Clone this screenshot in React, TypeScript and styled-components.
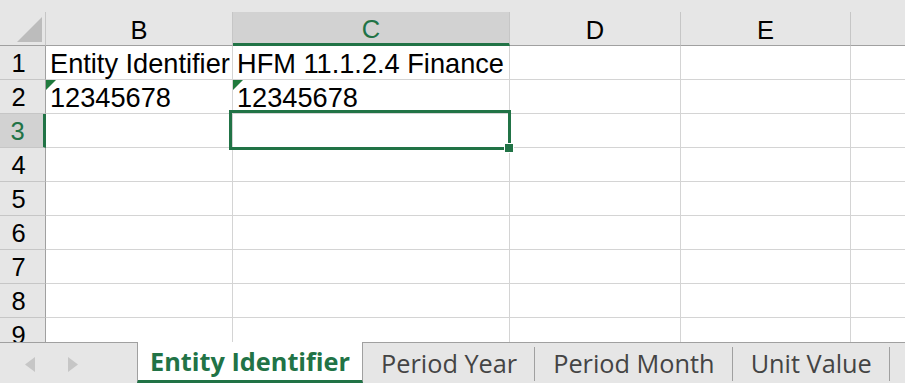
import React from "react";
import styled, { createGlobalStyle, css } from "styled-components";

const GREEN = "#217346";

const GlobalStyle = createGlobalStyle`
    html, body {
        margin: 0;
        padding: 0;
        background: #ffffff;
        overflow: hidden;
    }
`;

const Window = styled.div`
    width: 905px;
    height: 383px;
    display: flex;
    flex-direction: column;
    overflow: hidden;
    background: #ffffff;
`;

const SheetArea = styled.div`
    flex: 1;
    min-height: 0;
    overflow: hidden;
`;

const TopStrip = styled.div`
    height: 12px;
    background: #e6e6e6;
`;

const Grid = styled.div`
    display: grid;
    grid-template-columns: 46px 187px 277px 171px 170px 120px;
    grid-auto-rows: 34px;
    font-family: "Liberation Sans", Arial, sans-serif;
    font-size: 25.5px;
    color: #000000;
`;

const Corner = styled.div`
    position: relative;
    box-sizing: border-box;
    background: #e6e6e6;
    border-right: 1px solid #c6c6c6;
    border-bottom: 1px solid #a0a0a0;

    svg {
        position: absolute;
        left: 0;
        top: 0;
    }
`;

const ColumnHeader = styled.div<{ $active?: boolean }>`
    ${({ $active }) => css`
        box-sizing: border-box;
        display: flex;
        align-items: center;
        justify-content: center;
        padding-top: 3px;
        background: ${$active ? "#d2d2d2" : "#e6e6e6"};
        color: ${$active ? GREEN : "#000000"};
        border-right: 1px solid #c6c6c6;
        border-bottom: ${$active ? `3px solid ${GREEN}` : "1px solid #a0a0a0"};
    `}
`;

const RowHeader = styled.div<{ $active?: boolean }>`
    ${({ $active }) => css`
        box-sizing: border-box;
        display: flex;
        align-items: center;
        justify-content: center;
        padding-right: 8px;
        padding-top: 2px;
        background: ${$active ? "#d2d2d2" : "#e6e6e6"};
        color: ${$active ? GREEN : "#000000"};
        border-right: ${$active ? `3px solid ${GREEN}` : "1px solid #a0a0a0"};
        border-bottom: 1px solid #c6c6c6;
    `}
`;

const Cell = styled.div`
    position: relative;
    box-sizing: border-box;
    padding: 1px 0 0 4px;
    line-height: 33px;
    font-size: 27.2px;
    white-space: nowrap;
    border-right: 1px solid #d4d4d4;
    border-bottom: 1px solid #d4d4d4;
`;

const ErrorMark = styled.span`
    position: absolute;
    left: 0;
    top: 0;
    width: 0;
    height: 0;
    border-top: 10px solid #1f7a3d;
    border-right: 10px solid transparent;
`;

const Selection = styled.div`
    position: absolute;
    left: -4px;
    top: -4px;
    width: 282px;
    height: 40px;
    box-sizing: border-box;
    border: 3px solid ${GREEN};
    z-index: 2;
`;

const FillHandle = styled.span`
    position: absolute;
    right: -5px;
    bottom: -5px;
    width: 8px;
    height: 8px;
    background: ${GREEN};
    box-shadow: 0 0 0 1px #ffffff;
`;

const TabBar = styled.div`
    height: 41px;
    display: flex;
    background: #e6e6e6;
    font-family: "Open Sans", "Noto Sans", sans-serif;
    font-size: 25.3px;
`;

const TabNav = styled.div`
    width: 137px;
    box-sizing: border-box;
    display: flex;
    align-items: center;
    gap: 33px;
    padding: 2px 0 0 25px;
    border-top: 1px solid #a0a0a0;
`;

const Tab = styled.div<{ $active?: boolean }>`
    ${({ $active }) => css`
        position: relative;
        box-sizing: border-box;
        display: flex;
        align-items: center;
        white-space: nowrap;
        padding: 0 18px 0 18px;
        ${$active
            ? css`
                  background: #ffffff;
                  color: ${GREEN};
                  font-weight: 700;
                  padding: 0 12px 0 12px;
                  border-left: 1px solid #a0a0a0;
                  border-right: 1px solid #a0a0a0;
                  border-bottom: 3px solid ${GREEN};
              `
            : css`
                  color: #444444;
                  border-top: 1px solid #a0a0a0;

                  &::after {
                      content: "";
                      position: absolute;
                      right: 0;
                      top: 4px;
                      bottom: 2px;
                      width: 1px;
                      background: #a0a0a0;
                  }
              `}
    `}
`;

const TabFiller = styled.div`
    flex: 1;
    border-top: 1px solid #a0a0a0;
`;

const columns = ["B", "C", "D", "E", ""];

const rows: { n: number; cells: string[]; marks?: boolean }[] = [
    { n: 1, cells: ["Entity Identifier", "HFM 11.1.2.4 Finance", "", "", ""] },
    { n: 2, cells: ["12345678", "12345678", "", "", ""], marks: true },
    { n: 3, cells: ["", "", "", "", ""] },
    { n: 4, cells: ["", "", "", "", ""] },
    { n: 5, cells: ["", "", "", "", ""] },
    { n: 6, cells: ["", "", "", "", ""] },
    { n: 7, cells: ["", "", "", "", ""] },
    { n: 8, cells: ["", "", "", "", ""] },
    { n: 9, cells: ["", "", "", "", ""] },
];

const sheets = ["Entity Identifier", "Period Year", "Period Month", "Unit Value"];

const Arrow = ({ dir }: { dir: "left" | "right" }) => (
    <svg width="10" height="15" viewBox="0 0 10 15">
        <polygon
            points={dir === "left" ? "10,0 10,15 0,7.5" : "0,0 0,15 10,7.5"}
            fill="#c6c6c6"
        />
    </svg>
);

export default function App() {
    return (
        <>
            <GlobalStyle />
            <Window>
                <SheetArea>
                    <TopStrip />
                    <Grid>
                        <Corner>
                            <svg width="46" height="34">
                                <polygon points="17,30 42,5 42,30" fill="#bcbcbc" />
                            </svg>
                        </Corner>
                        {columns.map((c, i) => (
                            <ColumnHeader key={i} $active={c === "C"}>
                                {c}
                            </ColumnHeader>
                        ))}
                        {rows.map((row) => (
                            <React.Fragment key={row.n}>
                                <RowHeader $active={row.n === 3}>{row.n}</RowHeader>
                                {row.cells.map((value, i) => (
                                    <Cell key={i}>
                                        {row.marks && value && <ErrorMark />}
                                        {value}
                                        {row.n === 3 && i === 1 && (
                                            <Selection>
                                                <FillHandle />
                                            </Selection>
                                        )}
                                    </Cell>
                                ))}
                            </React.Fragment>
                        ))}
                    </Grid>
                </SheetArea>
                <TabBar>
                    <TabNav>
                        <Arrow dir="left" />
                        <Arrow dir="right" />
                    </TabNav>
                    {sheets.map((name, i) => (
                        <Tab key={name} $active={i === 0}>
                            {name}
                        </Tab>
                    ))}
                    <TabFiller />
                </TabBar>
            </Window>
        </>
    );
}
